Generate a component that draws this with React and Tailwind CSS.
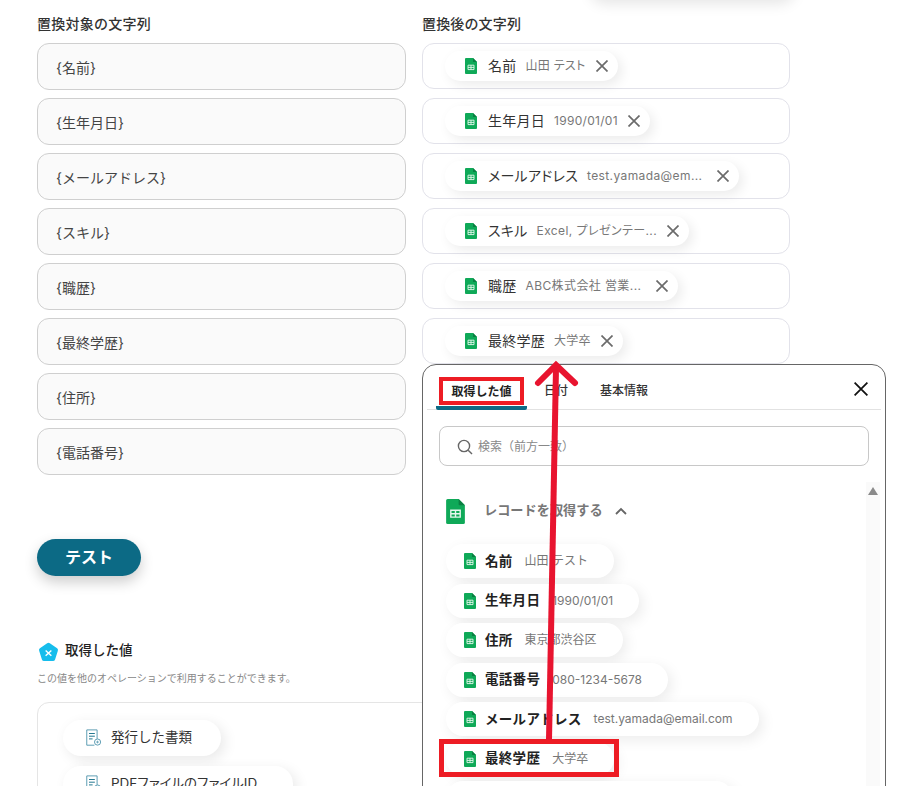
const font = { fontFamily: 'Inter, "Noto Sans CJK JP", sans-serif' };

function Sheet({ className }) {
  return (
    <svg viewBox="0 0 12 16" className={className}>
      <path d="M1 0H8L12 4V15a1 1 0 0 1-1 1H1a1 1 0 0 1-1-1V1a1 1 0 0 1 1-1Z" fill="#0fa958" />
      <path d="M8 0L12 4H8.6a.6.6 0 0 1-.6-.6Z" fill="#0a7f42" />
      <path d="M3 7.2H9V11.6H3Z M3 9.4H9 M6 7.2V11.6" fill="none" stroke="#e6f7ee" strokeWidth="0.9" />
    </svg>
  );
}

function Close({ className, color = '#6b6b6b', width = 1.7 }) {
  return (
    <svg viewBox="0 0 12 12" className={className}>
      <path d="M.5.5 11.5 11.5M11.5.5.5 11.5" stroke={color} strokeWidth={width} fill="none" />
    </svg>
  );
}

function DocIcon() {
  return (
    <svg viewBox="0 0 18 20" className="w-[17px] h-[18px] shrink-0">
      <path d="M1.5 1H13V11M10 18H1.5V1" fill="none" stroke="#4d93ab" strokeWidth="1" />
      <path d="M4 5H10.5M4 8H10.5M4 11H8" stroke="#0c6a85" strokeWidth="1" />
      <circle cx="13.5" cy="14.5" r="3.4" fill="none" stroke="#4d93ab" strokeWidth="1" />
      <path d="M11.8 14.5H15M13.5 13V16" stroke="#4d93ab" strokeWidth=".8" />
    </svg>
  );
}

const targets = ['{名前}', '{生年月日}', '{メールアドレス}', '{スキル}', '{職歴}', '{最終学歴}', '{住所}', '{電話番号}'];
const chosen = [
  ['名前', '山田 テスト', false],
  ['生年月日', '1990/01/01', false],
  ['メールアドレス', 'test.yamada@em...', true],
  ['スキル', 'Excel, プレゼンテー...', true],
  ['職歴', 'ABC株式会社 営業...', true],
  ['最終学歴', '大学卒', false],
];
const records = [
  ['名前', '山田 テスト'],
  ['生年月日', '1990/01/01'],
  ['住所', '東京都渋谷区'],
  ['電話番号', '080-1234-5678'],
  ['メールアドレス', 'test.yamada@email.com'],
  ['最終学歴', '大学卒'],
  ['スキル', 'Excel, プレゼンテーション能力'],
];

export default function App() {
  return (
    <div style={font} className="relative w-[910px] h-[786px] overflow-hidden bg-white text-[#333]">
      <div className="absolute left-[590px] -top-[30px] w-[205px] h-[30px] rounded-full shadow-[0_4px_14px_rgba(0,0,0,0.1)]" />

      <div className="pl-[37px] pt-[15px]">
        <div className="grid grid-cols-[369px_368px] gap-x-[16px]">
          <div>
            <div className="h-[18px] text-[14px] tracking-[0.25px] leading-[18px] text-[#333] font-medium">置換対象の文字列</div>
            <div className="mt-[10px] flex flex-col gap-2">
              {targets.map((t) => (
                <div key={t} className="h-[47px] flex items-center pl-[18px] pt-[2px] rounded-[12px] border border-[#cfcfcf] bg-[#fafafa] text-[14px] text-[#444]">
                  {t}
                </div>
              ))}
            </div>
          </div>
          <div>
            <div className="h-[18px] text-[14px] tracking-[0.15px] leading-[18px] text-[#333] font-medium">置換後の文字列</div>
            <div className="mt-[10px] flex flex-col gap-[9px]">
              {chosen.map(([l, v, cut]) => (
                <div key={l} className="h-[46px] flex items-center pl-[22px] rounded-[12px] border border-[#e2e2ea] bg-white">
                  <div className="h-[30px] flex items-center pl-[20px] pr-[10px] rounded-full bg-white shadow-[4px_4px_12px_rgba(0,0,0,0.08)]">
                    <Sheet className="w-[12px] h-[16px] shrink-0" />
                    <span className="ml-[11px] pb-[1px] text-[14px] tracking-[0.25px] [font-feature-settings:'palt'] text-[#333] whitespace-nowrap">{l}</span>
                    <span className={cut ? "ml-[9px] w-[120px] whitespace-nowrap text-[12px] tracking-[0.4px] [font-feature-settings:'palt'] text-[#777]" : "ml-[9px] whitespace-nowrap text-[12px] tracking-[0.3px] [font-feature-settings:'palt'] text-[#777]"}>{v}</span>
                    <Close className="ml-[10px] w-[12px] h-[12px] shrink-0" />
                  </div>
                </div>
              ))}
            </div>
          </div>
        </div>

        <button className="mt-[64px] block w-[104px] h-[37px] pb-[2px] rounded-full bg-[#0c6a85] text-white text-[16px] font-bold shadow-[0_6px_14px_rgba(0,0,0,0.2)]">
          テスト
        </button>

        <div className="mt-[65px] flex items-center h-[22px]">
          <svg viewBox="0 0 22 22" className="w-[21px] h-[21px] ml-px shrink-0">
            <path d="M9.6 1.2a2.4 2.4 0 0 1 2.8 0l7.6 5.4a2.2 2.2 0 0 1 .8 2.5l-2.9 9.2a2.3 2.3 0 0 1-2.2 1.6H6.3a2.3 2.3 0 0 1-2.2-1.6L1.2 9.100a2.200 2.200 0 0 1 .8-2.500Z" fill="#16bdec" />
            <path d="M8 9l6 5.500M14 9l-6 5.500" stroke="#fff" strokeWidth="1.500" />
          </svg>
          <span className="ml-[6px] pb-[3px] text-[13.500px] font-medium text-[#222]">取得した値</span>
        </div>
        <div className="mt-[8px] h-[14px] text-[10px] leading-[14px] text-[#888]">この値を他のオペレーションで利用することができます。</div>
        <div className="mt-[17px] w-[753px] h-[200px] rounded-[12px] border border-[#e5e5e5] pl-[25px] pt-[17px] flex flex-col items-start gap-[10px]">
          <div className="h-[36px] w-[158px] flex items-center pl-[22px] rounded-full bg-white shadow-[4px_4px_14px_rgba(0,0,0,0.09)]">
            <DocIcon />
            <span className="ml-[9px] pb-[1px] text-[13.500px] text-[#333]">発行した書類</span>
          </div>
          <div className="h-[36px] w-[230px] flex items-center pl-[22px] rounded-full bg-white shadow-[4px_4px_14px_rgba(0,0,0,0.09)]">
            <DocIcon />
            <span className="ml-[9px] pb-[1px] text-[13.500px] [font-feature-settings:'palt'] text-[#333] whitespace-nowrap">PDFファイルのファイルID</span>
          </div>
        </div>
      </div>

      {/* popover */}
      <div className="absolute left-[422px] top-[364px] w-[464px] h-[460px] rounded-t-[14px] border border-[#666] bg-white">
        <div className="relative mx-[4px] h-[45px] border-b border-[#e2e2e2] flex items-end pl-[9px]">
          <div className="relative w-[91px] h-[40px] pt-[8px] flex items-center justify-center text-[12px] font-bold text-[#222] border-b-[4px] border-[#0c6a85] rounded-b-[2px] -mb-px">
            取得した値
          </div>
          <div className="ml-[17px] h-[40px] pt-[8px] pb-[4px] flex items-center text-[12px] font-medium text-[#333]">日付</div>
          <div className="ml-[32px] h-[40px] pt-[8px] pb-[4px] flex items-center text-[12px] font-medium text-[#333]">基本情報</div>
          <Close className="absolute right-[13px] top-[17px] w-[14px] h-[14px]" color="#111" width={1.5} />
        </div>

        <div className="mx-[16px] mt-[16px] h-[40px] flex items-center pl-[17px] pt-[2px] rounded-[8px] border border-[#c8c8c8]">
          <svg viewBox="0 0 16 16" className="w-[16px] h-[16px] shrink-0" fill="none" stroke="#666" strokeWidth="1.400">
            <circle cx="7" cy="7" r="5.600" />
            <path d="M11.200 11.200 15 15" />
          </svg>
          <span className="ml-[5px] text-[12px] text-[#888]">検索（前方一致）</span>
        </div>

        <div className="relative flex">
          <div className="flex-1 pl-[23px]">
            <div className="mt-[32px] h-[26px] flex items-center">
              <Sheet className="w-[19px] h-[25px] shrink-0" />
              <span className="ml-[19px] text-[13.200px] font-bold text-[#777]">レコードを取得する</span>
              <svg viewBox="0 0 12 8" className="ml-[12px] w-[12px] h-[8px]" fill="none" stroke="#666" strokeWidth="1.800">
                <path d="M1 7l5-5 5 5" />
              </svg>
            </div>
            <div className="mt-[20px] flex flex-col items-start gap-[5.500px]">
              {records.map(([l, v]) => (
                <div key={l} className="h-[34px] flex items-center pl-[18px] pr-[26px] rounded-full bg-white shadow-[4px_4px_14px_rgba(0,0,0,0.08)]">
                  <Sheet className="w-[12px] h-[16px] shrink-0" />
                  <span className="ml-[9px] text-[13.500px] tracking-[0.3px] font-bold text-[#222] whitespace-nowrap">{l}</span>
                  <span className="ml-[12px] text-[12px] text-[#777] whitespace-nowrap">{v}</span>
                </div>
              ))}
            </div>
          </div>
          <div className="absolute right-[5px] top-[16px] w-[14px] h-[320px] bg-[#fafafa] flex justify-center pt-[5px]">
            <svg viewBox="0 0 10 8" className="w-[10px] h-[8px]"><path d="M5 0l5 8H0Z" fill="#8a8a8a" /></svg>
          </div>
        </div>
      </div>

      {/* annotations */}
      <div className="absolute left-[439px] top-[377px] w-[85px] h-[28px] border-[4px] border-[#ed1c24]" />
      <div className="absolute left-[439px] top-[739px] w-[180px] h-[38px] border-[5px] border-[#ed1c24]" />
      <svg className="absolute left-0 top-0 pointer-events-none" width="910" height="786" viewBox="0 0 910 786">
        <path d="M549 740 556 368" stroke="#e8142f" strokeWidth="6" fill="none" />
        <path d="M538 383 556 365 575 383" stroke="#e8142f" strokeWidth="6" fill="none" strokeLinecap="round" />
      </svg>
    </div>
  );
}
